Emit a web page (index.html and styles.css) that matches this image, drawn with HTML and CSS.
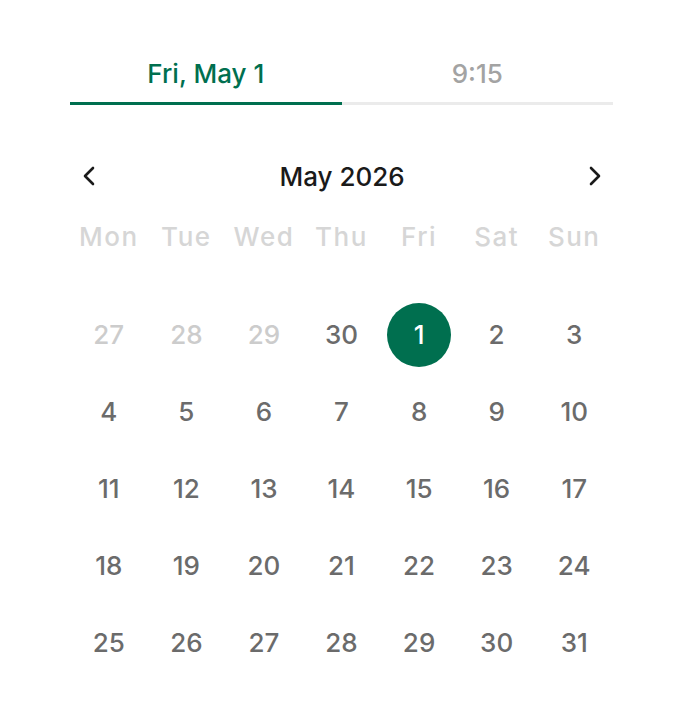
FILE: index.html
```html
<!DOCTYPE html>
<html>
<head>
<meta charset="utf-8">
<link rel="stylesheet" href="styles.css">
</head>
<body>
<div class="picker">
  <div class="tabs">
    <div class="tab active">Fri, May 1</div>
    <div class="tab">9:15</div>
  </div>
  <div class="header">
    <button class="nav"><svg width="14" height="22" viewBox="0 0 14 22"><path d="M11 3 L3 11 L11 19" fill="none" stroke="#1a1a1a" stroke-width="2.6" stroke-linecap="round" stroke-linejoin="round"/></svg></button>
    <div class="month">May 2026</div>
    <button class="nav"><svg width="14" height="22" viewBox="0 0 14 22"><path d="M3 3 L11 11 L3 19" fill="none" stroke="#1a1a1a" stroke-width="2.6" stroke-linecap="round" stroke-linejoin="round"/></svg></button>
  </div>
  <div class="weekdays">
    <div>Mon</div><div>Tue</div><div>Wed</div><div>Thu</div><div>Fri</div><div>Sat</div><div>Sun</div>
  </div>
  <div class="days">
    <div class="day muted">27</div><div class="day muted">28</div><div class="day muted">29</div><div class="day">30</div><div class="day selected"><span>1</span></div><div class="day">2</div><div class="day">3</div>
    <div class="day">4</div><div class="day">5</div><div class="day">6</div><div class="day">7</div><div class="day">8</div><div class="day">9</div><div class="day">10</div>
    <div class="day">11</div><div class="day">12</div><div class="day">13</div><div class="day">14</div><div class="day">15</div><div class="day">16</div><div class="day">17</div>
    <div class="day">18</div><div class="day">19</div><div class="day">20</div><div class="day">21</div><div class="day">22</div><div class="day">23</div><div class="day">24</div>
    <div class="day">25</div><div class="day">26</div><div class="day">27</div><div class="day">28</div><div class="day">29</div><div class="day">30</div><div class="day">31</div>
  </div>
</div>
</body>
</html>
```
FILE: styles.css
```css
html, body {
  margin: 0;
  padding: 0;
  background: #ffffff;
}
body {
  font-family: Inter, "Noto Sans", sans-serif;
  font-weight: 500;
}
.picker {
  width: 543px;
  margin-left: 70px;
  padding-top: 52px;
}
.tabs {
  display: grid;
  grid-template-columns: 1fr 1fr;
}
.tab {
  text-align: center;
  font-size: 26px;
  line-height: 44px;
  height: 53px;
  color: #a3a3a3;
  border-bottom: 3px solid #ebebeb;
  box-sizing: border-box;
}
.tab.active {
  color: #006f4f;
  border-bottom-color: #006f4f;
}
.header {
  display: flex;
  align-items: center;
  justify-content: space-between;
  height: 60px;
  margin-top: 41px;
  padding: 0 11px 0 12px;
}
.nav {
  background: none;
  border: 0;
  padding: 0;
  width: 14px;
  height: 22px;
  display: flex;
}
.month {
  font-size: 26px;
  color: #1a1a1a;
}
.weekdays {
  display: grid;
  grid-template-columns: repeat(7, 1fr);
  height: 60px;
  align-items: center;
  text-align: center;
  font-size: 26px;
  letter-spacing: 1.5px;
  color: #d6d6d6;
}
.days {
  display: grid;
  grid-template-columns: repeat(7, 1fr);
  grid-auto-rows: 77px;
  margin-top: 30px;
}
.day {
  display: flex;
  align-items: center;
  justify-content: center;
  font-size: 26px;
  color: #6b6b6b;
}
.day.muted {
  color: #cccccc;
}
.day.selected span {
  width: 64px;
  height: 64px;
  border-radius: 50%;
  background: #006f4f;
  color: #ffffff;
  display: flex;
  align-items: center;
  justify-content: center;
}
```
